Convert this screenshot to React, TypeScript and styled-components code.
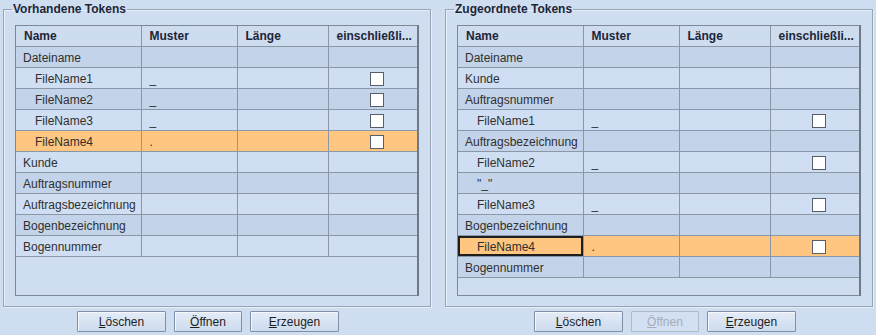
import React from 'react';
import styled, { createGlobalStyle } from 'styled-components';

interface TokenRow {
    name: string;
    pattern?: string;
    nested?: boolean;
    checkbox?: boolean;
    selected?: boolean;
    focused?: boolean;
}

const availableTokens: TokenRow[] = [
    { name: 'Dateiname' },
    { name: 'FileName1', pattern: '_', nested: true, checkbox: true },
    { name: 'FileName2', pattern: '_', nested: true, checkbox: true },
    { name: 'FileName3', pattern: '_', nested: true, checkbox: true },
    { name: 'FileName4', pattern: '.', nested: true, checkbox: true, selected: true },
    { name: 'Kunde' },
    { name: 'Auftragsnummer' },
    { name: 'Auftragsbezeichnung' },
    { name: 'Bogenbezeichnung' },
    { name: 'Bogennummer' },
];

const assignedTokens: TokenRow[] = [
    { name: 'Dateiname' },
    { name: 'Kunde' },
    { name: 'Auftragsnummer' },
    { name: 'FileName1', pattern: '_', nested: true, checkbox: true },
    { name: 'Auftragsbezeichnung' },
    { name: 'FileName2', pattern: '_', nested: true, checkbox: true },
    { name: '"_"', nested: true },
    { name: 'FileName3', pattern: '_', nested: true, checkbox: true },
    { name: 'Bogenbezeichnung' },
    { name: 'FileName4', pattern: '.', nested: true, checkbox: true, selected: true, focused: true },
    { name: 'Bogennummer' },
];

const GlobalStyle = createGlobalStyle`
    html, body {
        margin: 0;
        padding: 0;
        background: #cfddf0;
        font-family: "Liberation Sans", Arial, sans-serif;
        font-size: 12px;
        color: #303030;
    }
`;

const Page = styled.div`
    display: grid;
    grid-template-columns: 428px 428px;
    column-gap: 14px;
    padding: 2px 0 0 3px;
    width: 876px;
    height: 335px;
    box-sizing: border-box;
`;

const Column = styled.div`
    display: flex;
    flex-direction: column;
`;

const Group = styled.fieldset`
    margin: 0;
    padding: 9px 11px 10px 11px;
    border: 1px solid #97a4b4;
    box-shadow: inset 1px 1px 0 #e6eef9, 1px 1px 0 #e6eef9;
    min-width: 0;
    box-sizing: border-box;
    width: 428px;
`;

const Legend = styled.legend`
    padding: 0 1px;
    margin-left: -3px;
    font-weight: bold;
    font-size: 12px;
    line-height: 14px;
    color: #1c2638;
`;

const Pane = styled.div`
    height: 271px;
    border: 1px solid #7c8898;
    border-right: 2px solid #6e7a89;
    background: #cfddf0;
    box-sizing: border-box;
    overflow: hidden;
`;

const Table = styled.table`
    border-collapse: collapse;
    table-layout: fixed;
    width: 402px;
`;

const HeadCell = styled.th`
    height: 20px;
    padding: 0 0 0 8px;
    text-align: left;
    font-weight: bold;
    color: #1c2638;
    background: #cedcf0;
    border-right: 1px solid #8b97a7;
    border-bottom: 1px solid #8b97a7;
    white-space: nowrap;
    overflow: hidden;

    &:last-child {
        border-right: none;
    }
`;

const Row = styled.tr<{ $dark: boolean; $selected: boolean }>`
    background: ${({ $dark, $selected }) => ($selected ? '#fec680' : $dark ? '#c3d3e9' : '#cfdef2')};
`;

const Cell = styled.td<{ $indent?: boolean; $focused?: boolean; $center?: boolean }>`
    height: 19px;
    padding: 1px 0 0 ${({ $indent }) => ($indent ? '19px' : '7px')};
    border-right: 1px solid #8b97a7;
    border-bottom: 1px solid #8b97a7;
    white-space: nowrap;
    overflow: hidden;
    text-align: ${({ $center }) => ($center ? 'center' : 'left')};
    box-shadow: ${({ $focused }) => ($focused ? 'inset 0 0 0 2px #1e1e1e' : 'none')};
    line-height: 14px;

    &:last-child {
        border-right: none;
    }
`;

const PatternCell = styled(Cell)`
    padding-left: 8px;
`;

const Check = styled.span`
    display: inline-block;
    width: 12px;
    height: 12px;
    background: #ffffff;
    border: 1px solid #555e6a;
    vertical-align: middle;
`;

const ButtonRow = styled.div<{ $offset: number }>`
    display: flex;
    gap: 8px;
    margin-top: 4px;
    padding-left: ${({ $offset }) => $offset}px;
`;

const Button = styled.button<{ $width: number }>`
    width: ${({ $width }) => $width}px;
    height: 21px;
    padding: 0;
    font-family: "Liberation Sans", Arial, sans-serif;
    font-size: 12px;
    color: #1e1e1e;
    background: linear-gradient(#e4ecf7, #cddbee);
    border: 1px solid #7f8fa5;
    border-radius: 1px;
    box-shadow: inset 1px 1px 0 #f4f8fd;

    &:disabled {
        color: #a3aebc;
        border-color: #aebbcb;
        background: #d3e0f1;
        box-shadow: none;
    }
`;

const Mnemonic = styled.span`
    text-decoration: underline;
`;

const TokenTable: React.FC<{ rows: TokenRow[] }> = ({ rows }) => (
    <Pane>
        <Table>
            <colgroup>
                <col style={{ width: 125 }} />
                <col style={{ width: 96 }} />
                <col style={{ width: 91 }} />
                <col style={{ width: 90 }} />
            </colgroup>
            <thead>
                <tr>
                    <HeadCell>Name</HeadCell>
                    <HeadCell>Muster</HeadCell>
                    <HeadCell>Länge</HeadCell>
                    <HeadCell>einschließli...</HeadCell>
                </tr>
            </thead>
            <tbody>
                {rows.map((row, i) => (
                    <Row key={row.name + i} $dark={i % 2 === 0} $selected={!!row.selected}>
                        <Cell $indent={row.nested} $focused={row.focused}>{row.name}</Cell>
                        <PatternCell>{row.pattern ?? ''}</PatternCell>
                        <Cell />
                        <Cell $center>{row.checkbox && <Check />}</Cell>
                    </Row>
                ))}
            </tbody>
        </Table>
    </Pane>
);

const Buttons: React.FC<{ offset: number; canOpen: boolean }> = ({ offset, canOpen }) => (
    <ButtonRow $offset={offset}>
        <Button $width={89}><Mnemonic>L</Mnemonic>öschen</Button>
        <Button $width={68} disabled={!canOpen}><Mnemonic>Ö</Mnemonic>ffnen</Button>
        <Button $width={89}><Mnemonic>E</Mnemonic>rzeugen</Button>
    </ButtonRow>
);

export default function App() {
    return (
        <>
            <GlobalStyle />
            <Page>
                <Column>
                    <Group>
                        <Legend>Vorhandene Tokens</Legend>
                        <TokenTable rows={availableTokens} />
                    </Group>
                    <Buttons offset={74} canOpen />
                </Column>
                <Column>
                    <Group>
                        <Legend>Zugeordnete Tokens</Legend>
                        <TokenTable rows={assignedTokens} />
                    </Group>
                    <Buttons offset={89} canOpen={false} />
                </Column>
            </Page>
        </>
    );
}
